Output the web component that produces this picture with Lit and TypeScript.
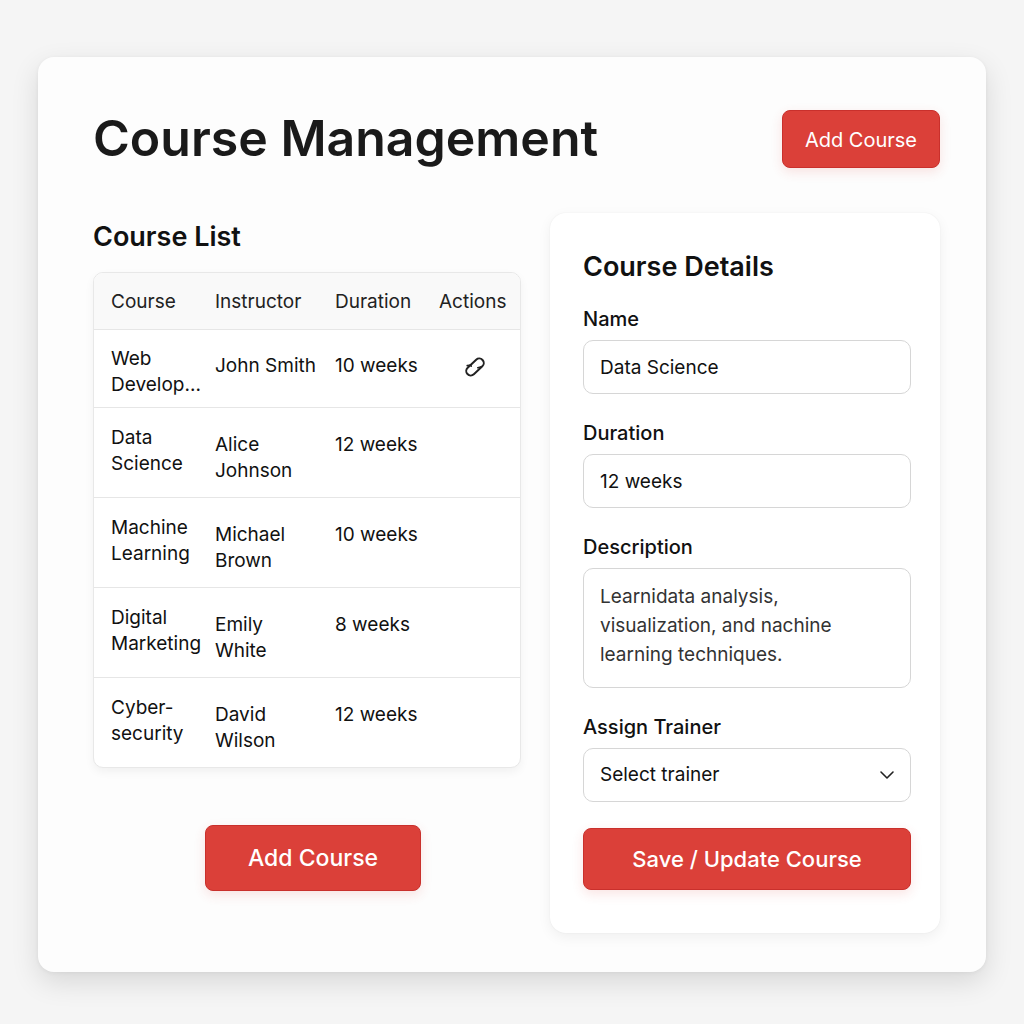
import { LitElement, html, css } from "lit";
import { customElement } from "lit/decorators.js";

interface Course {
  name: string[];
  instructor: string[];
  duration: string;
  linked?: boolean;
}

const COURSES: Course[] = [
  { name: ["Web", "Develop..."], instructor: ["John Smith"], duration: "10 weeks", linked: true },
  { name: ["Data", "Science"], instructor: ["Alice", "Johnson"], duration: "12 weeks" },
  { name: ["Machine", "Learning"], instructor: ["Michael", "Brown"], duration: "10 weeks" },
  { name: ["Digital", "Marketing"], instructor: ["Emily", "White"], duration: "8 weeks" },
  { name: ["Cyber-", "security"], instructor: ["David", "Wilson"], duration: "12 weeks" },
];

const lines = (parts: string[]) => parts.map((part, i) => (i ? html`<br />${part}` : part));

const linkIcon = html`<svg class="icon" viewBox="0 0 24 24" aria-hidden="true">
  <g fill="none" stroke="#222" stroke-width="2" stroke-linecap="round" stroke-linejoin="round">
    <rect x="1.700" y="7.500" width="20.600" height="9" rx="4.500" transform="rotate(-43 12 12)" />
    <path stroke-width="1.600" d="M4.200 10.600 6.600 10.300M7.500 9.800 8.200 11.200M14.800 12.700 17.600 11.900" />
  </g>
</svg>`;

@customElement("app-root")
export class AppRoot extends LitElement {
  static styles = css`
    :host {
      display: block;
      box-sizing: border-box;
      min-height: 100vh;
      padding: 57px 38px 52px;
      background: #f5f5f5;
      color: #111;
      font-family: Inter, "Liberation Sans", sans-serif;
      font-size: 19px;
      line-height: 26px;
    }
    *,
    *::before {
      box-sizing: border-box;
    }
    .card {
      padding: 53px 46px 39px 55px;
      border-radius: 16px;
      background: #fdfdfd;
      box-shadow: 0 10px 28px rgba(0, 0, 0, 0.12), 0 1px 4px rgba(0, 0, 0, 0.05);
    }
    .top {
      display: flex;
      align-items: center;
      justify-content: space-between;
      margin-bottom: 45px;
    }
    h1,
    h2 {
      margin: 0;
      font-weight: 600;
    }
    h1 {
      font-size: 50px;
      line-height: 54px;
      padding-bottom: 2px;
      color: #1a1a1a;
    }
    h2 {
      font-size: 27px;
      line-height: 32px;
    }
    .columns {
      display: grid;
      grid-template-columns: 428fr 390fr;
      gap: 29px;
    }
    .list {
      display: flex;
      flex-direction: column;
      gap: 19px;
      padding-top: 8px;
    }
    .frame {
      overflow: hidden;
      border: 1px solid #e8e8e8;
      border-radius: 10px;
      background: #fff;
      box-shadow: 0 4px 10px rgba(0, 0, 0, 0.05);
    }
    table {
      width: 100%;
      table-layout: fixed;
      border-collapse: collapse;
    }
    .col-course {
      width: 121px;
    }
    .col-instructor {
      width: 120px;
    }
    .col-duration {
      width: 104px;
    }
    th {
      padding: 16px 0 14px;
      background: #f9f9f9;
      font-weight: 400;
      text-align: left;
      color: #222;
    }
    td {
      padding: 24px 0 13px;
      border-top: 1px solid #e6e6e6;
      vertical-align: top;
      white-space: nowrap;
    }
    th:first-child,
    td:first-child {
      padding-left: 17px;
    }
    td:first-child {
      padding-top: 17px;
      padding-bottom: 20px;
    }
    tr.compact td {
      padding-top: 23px;
      padding-bottom: 9px;
    }
    tr.compact td:first-child {
      padding-top: 16px;
    }
    .action {
      display: block;
      margin-left: 24px;
      padding: 2px 0 0;
      border: 0;
      background: none;
    }
    .icon {
      display: block;
      width: 24px;
      height: 24px;
    }
    button {
      font-family: inherit;
      cursor: pointer;
    }
    .primary {
      border: 1px solid #c9302c;
      border-radius: 8px;
      background: #db4039;
      color: #fff;
      box-shadow: 0 4px 12px rgba(219, 64, 57, 0.14);
    }
    .small {
      padding: 16px 22px 14px;
      font-size: 20px;
      line-height: 26px;
    }
    .list-actions {
      display: flex;
      justify-content: center;
      padding: 38px 0 0 12px;
    }
    .large {
      padding: 16px 42px;
      font-size: 23px;
      line-height: 32px;
      font-weight: 500;
    }
    .details {
      padding: 38px 29px 43px 33px;
      border-radius: 16px;
      background: #fff;
      box-shadow: 0 4px 14px rgba(0, 0, 0, 0.06), 0 0 2px rgba(0, 0, 0, 0.06);
    }
    form {
      display: flex;
      flex-direction: column;
      gap: 26px;
      margin-top: 23px;
    }
    .field {
      display: flex;
      flex-direction: column;
      gap: 8px;
    }
    label {
      font-size: 20px;
      font-weight: 500;
    }
    input,
    textarea,
    select {
      display: block;
      width: 100%;
      margin: 0;
      border: 1px solid #d6d6d6;
      border-radius: 10px;
      outline: none;
      background: #fff;
      color: #111;
      font: inherit;
    }
    input,
    select {
      height: 54px;
      padding: 0 16px;
    }
    textarea {
      height: 120px;
      padding: 13px 16px;
      color: #333;
      line-height: 29px;
      resize: none;
      overflow: hidden;
    }
    select {
      appearance: none;
    }
    .select {
      position: relative;
    }
    .chevron {
      position: absolute;
      top: 19px;
      right: 16px;
      width: 16px;
      height: 16px;
      pointer-events: none;
    }
    .save {
      padding: 14px;
      font-size: 22px;
      line-height: 32px;
      font-weight: 500;
    }
  `;

  render() {
    return html`
      <main class="card">
        <header class="top">
          <h1>Course Management</h1>
          <button class="primary small" type="button">Add Course</button>
        </header>
        <div class="columns">
          <section class="list">
            <h2>Course List</h2>
            <div class="frame">
              <table>
                <thead>
                  <tr>
                    <th class="col-course" scope="col">Course</th>
                    <th class="col-instructor" scope="col">Instructor</th>
                    <th class="col-duration" scope="col">Duration</th>
                    <th scope="col">Actions</th>
                  </tr>
                </thead>
                <tbody>
                  ${COURSES.map(
                    (course) => html`<tr class=${course.linked ? "compact" : ""}>
                      <td>${lines(course.name)}</td>
                      <td>${lines(course.instructor)}</td>
                      <td>${course.duration}</td>
                      <td>
                        ${course.linked
                          ? html`<button class="action" type="button" aria-label="Edit">${linkIcon}</button>`
                          : null}
                      </td>
                    </tr>`
                  )}
                </tbody>
              </table>
            </div>
            <div class="list-actions">
              <button class="primary large" type="button">Add Course</button>
            </div>
          </section>
          <section class="details">
            <h2>Course Details</h2>
            <form>
              <div class="field">
                <label for="name">Name</label>
                <input id="name" type="text" .value=${"Data Science"} />
              </div>
              <div class="field">
                <label for="duration">Duration</label>
                <input id="duration" type="text" .value=${"12 weeks"} />
              </div>
              <div class="field">
                <label for="description">Description</label>
                <textarea
                  id="description"
                  .value=${"Learnidata analysis, visualization, and nachine learning techniques."}
                ></textarea>
              </div>
              <div class="field">
                <label for="trainer">Assign Trainer</label>
                <div class="select">
                  <select id="trainer">
                    <option>Select trainer</option>
                  </select>
                  <svg class="chevron" viewBox="0 0 16 16" aria-hidden="true">
                    <path
                      d="M2 5l6 6 6-6"
                      fill="none"
                      stroke="#222"
                      stroke-width="1.6"
                      stroke-linecap="round"
                      stroke-linejoin="round"
                    />
                  </svg>
                </div>
              </div>
              <button class="primary save" type="button">Save / Update Course</button>
            </form>
          </section>
        </div>
      </main>
    `;
  }
}
